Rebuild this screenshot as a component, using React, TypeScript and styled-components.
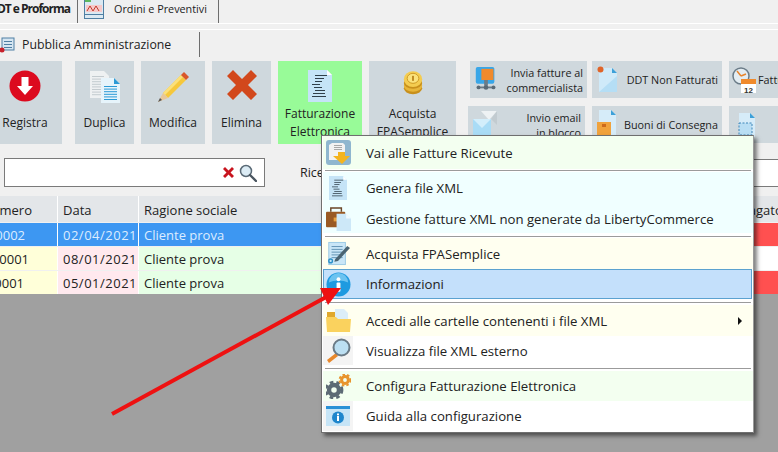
import React from "react";
import styled, { createGlobalStyle } from "styled-components";

const Global = createGlobalStyle`
  html, body { margin: 0; padding: 0; background: #f0f0f0; }
  #root { width: 778px; height: 452px; }
`;

const Page = styled.div`
  position: relative;
  width: 778px;
  height: 452px;
  overflow: hidden;
  background: #f0f0f0;
  display: flex;
  flex-direction: column;
  font-family: "Open Sans", "Noto Sans", sans-serif;
  font-size: 12px;
  color: #222;
`;

const TabBar = styled.div<{ $h: number; $mt?: number }>`
  display: flex;
  height: ${(p) => p.$h}px;
  margin-top: ${(p) => p.$mt ?? 0}px;
  border-bottom: 1px solid #fff;
  flex: none;
  align-items: flex-end;
`;

const SubTabBar = styled.div`
  display: flex;
  border-top: 1px solid #fff;
  margin-top: 5px;
  flex: none;
  padding-top: 2px;
  height: 25px;
`;

const Tab = styled.div<{ $w: number; $bold?: boolean; $ml?: number; $gap?: number; $pb?: number; $size?: number }>`
  width: ${(p) => p.$w}px;
  margin-left: ${(p) => p.$ml ?? 0}px;
  height: 100%;
  box-sizing: border-box;
  border-right: 1px solid #6e6e6e;
  display: flex;
  align-items: center;
  gap: ${(p) => p.$gap ?? 10}px;
  padding-left: 6px;
  padding-bottom: ${(p) => p.$pb ?? 0}px;
  white-space: nowrap;
  font-size: ${(p) => p.$size ?? 12}px;
  font-weight: ${(p) => (p.$bold ? 700 : 400)};
  letter-spacing: ${(p) => (p.$bold ? "-1px" : "0")};
  flex: none;
`;

const BoldTabText = styled.span`
  padding-left: 7px;
`;

const Toolbar = styled.div`
  display: flex;
  height: 83px;
  margin: 4px 0 0 -12px;
  gap: 7px;
  flex: none;
`;

const LargeButton = styled.div<{ $w: number; $green?: boolean; $after?: number }>`
  width: ${(p) => p.$w}px;
  margin-right: ${(p) => p.$after ?? 0}px;
  background: ${(p) => (p.$green ? "#98fb98" : "#cfd8dd")};
  display: flex;
  flex-direction: column;
  align-items: center;
  padding-top: 9px;
  box-sizing: border-box;
  text-align: center;
  line-height: 18px;
  flex: none;
  white-space: nowrap;
`;

const IconSlot = styled.div`
  height: 34px;
  display: flex;
  align-items: flex-start;
  justify-content: center;
`;

const Label = styled.div<{ $single?: boolean }>`
  margin-top: ${(p) => (p.$single ? 10 : 1)}px;
`;

const SmallColumn = styled.div`
  display: flex;
  flex-direction: column;
  gap: 8px;
  margin-left: 7px;
`;

const SmallRow = styled.div<{ $ml?: number }>`
  display: flex;
  margin-left: ${(p) => p.$ml ?? 0}px;
`;

const SmallButton = styled.div<{ $w: number; $mr?: number }>`
  width: ${(p) => p.$w}px;
  margin-right: ${(p) => p.$mr ?? 0}px;
  height: 37px;
  background: #cfd8dd;
  display: flex;
  align-items: center;
  justify-content: space-between;
  box-sizing: border-box;
  padding: 0 4px 0 5px;
  font-size: 10.8px;
  text-align: right;
  line-height: 15px;
  white-space: nowrap;
  flex: none;
  & > svg { flex: none; }
`;

const FarButton = styled(SmallButton)<{ $pl: number }>`
  justify-content: flex-start;
  padding-left: ${(p) => p.$pl}px;
`;

const SearchRow = styled.div`
  display: flex;
  align-items: center;
  height: 29px;
  margin: 14px 0 9px 4px;
  flex: none;
`;

const SearchBox = styled.div`
  width: 261px;
  height: 29px;
  box-sizing: border-box;
  border: 1px solid #7a7a7a;
  background: #fff;
  display: flex;
  align-items: center;
  justify-content: flex-end;
  gap: 4px;
  padding-right: 7px;
`;

const SearchLabel = styled.div`
  margin-left: 35px;
  width: 60px;
  flex: none;
  font-size: 12.5px;
`;

const SecondBox = styled.div`
  flex: 1;
  height: 28px;
  box-sizing: border-box;
  margin-left: 60px;
  border: 1px solid #7a7a7a;
  border-right: 0;
  background: #fff;
`;

const Table = styled.div`
  display: flex;
  flex-direction: column;
  flex: none;
`;

const Row = styled.div<{ $head?: boolean }>`
  display: grid;
  grid-template-columns: 57px 80px 1fr 42px;
  height: ${(p) => (p.$head ? 26 : 23)}px;
  margin-bottom: 1px;
  column-gap: 1px;
  line-height: ${(p) => (p.$head ? 28 : 24)}px;
  background: #fff;
  font-size: 13px;
`;

const Cell = styled.div<{ $bg: string; $fg?: string; $right?: number }>`
  background: ${(p) => p.$bg};
  color: ${(p) => p.$fg ?? "#222"};
  padding: 0 0 0 5px;
  overflow: hidden;
  white-space: nowrap;
  ${(p) =>
    p.$right !== undefined
      ? `padding: 0 ${p.$right}px 0 0; text-align: right; direction: rtl;`
      : ""}
`;

const DateCell = styled(Cell)`
  letter-spacing: 0.5px;
`;

const Canvas = styled.div`
  flex: 1;
  background: #a0a0a0;
  margin-top: -1px;
`;

const Menu = styled.div`
  position: absolute;
  left: 321px;
  top: 135px;
  width: 433px;
  height: 298px;
  box-sizing: border-box;
  background: #fff;
  border: 1px solid #6f6f6f;
  border-right-color: #9a9a9a;
  box-shadow: 3px 3px 4px rgba(0, 0, 0, 0.5);
  display: flex;
  flex-direction: column;
  padding-left: 1px;
`;

const MenuItem = styled.div<{ $bg?: string; $h: number; $active?: boolean }>`
  height: ${(p) => p.$h}px;
  flex: none;
  box-sizing: border-box;
  background: ${(p) => p.$bg ?? "#fff"};
  display: flex;
  align-items: center;
  font-size: 13.2px;
  color: #222;
  position: relative;
  margin-right: ${(p) => (p.$active ? 1 : 0)}px;
  border: ${(p) => (p.$active ? "1px solid #5ba2d0" : "0")};
`;

const MenuIcon = styled.div<{ $active?: boolean; $tile?: boolean }>`
  width: ${(p) => (p.$active ? 29 : 30)}px;
  margin-right: 13px;
  display: flex;
  align-items: center;
  justify-content: center;
  flex: none;
  align-self: stretch;
  background: ${(p) => (p.$tile ? "#f4f4f4" : "transparent")};
`;

const Separator = styled.div<{ $top?: number; $bottom?: number }>`
  height: 1px;
  margin: ${(p) => p.$top ?? 0}px 2px ${(p) => p.$bottom ?? 2}px 2px;
  background: #9b9b9b;
  flex: none;
`;

const SubArrow = styled.div`
  position: absolute;
  right: 11px;
  top: 50%;
  margin-top: -4px;
  border-left: 4px solid #111;
  border-top: 4px solid transparent;
  border-bottom: 4px solid transparent;
`;

const ArrowOverlay = styled.svg`
  position: absolute;
  left: 0;
  top: 0;
  pointer-events: none;
`;

const Info = ({ s = 25 }: { s?: number }) => (
  <svg width={s} height={s} viewBox="0 0 26 26">
    <circle cx="13" cy="13" r="12.5" fill="#1e9ae0" />
    <path d="M3 11a10 10 0 0 1 20 0c-5-3-15-3-20 0z" fill="#6cc3f0" />
    <circle cx="13" cy="7.5" r="2" fill="#fff" />
    <rect x="11" y="11" width="4" height="9.5" rx="1" fill="#fff" />
  </svg>
);

const Lines = ({ x, y, w, n, gap, c }: { x: number; y: number; w: number; n: number; gap: number; c: string }) => (
  <>
    {Array.from({ length: n }).map((_, i) => (
      <rect key={i} x={x} y={y + i * gap} width={w} height="1" fill={c} />
    ))}
  </>
);

const XmlDoc = ({ w = 24, h = 32 }: { w?: number; h?: number }) => (
  <svg width={w} height={h} viewBox="0 0 24 32">
    <path d="M0 0h19l5 5v27H0z" fill="#c5e4f7" />
    <path d="M19 0l5 5h-5z" fill="#fff" />
    <g fill="#2f3f4a">
      <rect x="7" y="5" width="12" height="1" />
      <rect x="7" y="8" width="9" height="1" />
      <rect x="7" y="11" width="7" height="1" />
      <rect x="4" y="14" width="8" height="1" />
      <rect x="6" y="17" width="8" height="1" />
      <rect x="7" y="20" width="10" height="1" />
      <rect x="5" y="23" width="12" height="1" />
      <rect x="4" y="26" width="14" height="1" />
    </g>
  </svg>
);

const Registra = () => (
  <svg width="32" height="32" viewBox="0 0 32 32">
    <circle cx="16" cy="16" r="15.5" fill="#dc0a1e" />
    <path d="M12.5 7h7v9h4.5L16 25l-8-9h4.5z" fill="#fff" />
  </svg>
);
const Duplica = () => (
  <svg width="32" height="34" viewBox="0 0 32 34">
    <path d="M1 1h14l5 5v22H1z" fill="#eef1f2" />
    <Lines x={3} y={6} w={12} n={8} gap={2.6} c="#c3cbcf" />
    <path d="M12 8h13l6 6v19H12z" fill="#e6f4fb" />
    <path d="M25 8l6 6h-6z" fill="#2a9ad6" />
    <Lines x={15} y={16} w={13} n={6} gap={2.6} c="#2a9ad6" />
  </svg>
);
const Pencil = () => (
  <svg width="34" height="34" viewBox="0 0 34 34">
    <path d="M7 23L25 5l5 5-18 18z" fill="#f6c83c" />
    <path d="M7 23L25 5l2 2L9 25z" fill="#fbe07a" />
    <path d="M25 5l3-3 5 5-3 3z" fill="#d9562a" />
    <path d="M7 23l5 5-10 4z" fill="#e8c79a" />
    <path d="M4 28l2 2-4 2z" fill="#555" />
  </svg>
);
const Cross = () => (
  <svg width="30" height="30" viewBox="0 0 30 30">
    <path d="M6 0l9 9 9-9 6 6-9 9 9 9-6 6-9-9-9 9-6-6 9-9-9-9z" fill="#d2481c" />
  </svg>
);
const Coins = () => (
  <svg width="22" height="25" viewBox="0 0 24 30">
    <ellipse cx="12" cy="22" rx="11" ry="7" fill="#c8901c" />
    <ellipse cx="12" cy="19" rx="11" ry="7" fill="#e8b63a" />
    <ellipse cx="12" cy="15.5" rx="11" ry="7" fill="#c8901c" />
    <ellipse cx="12" cy="11" rx="11" ry="9.5" fill="#f4cc50" />
    <ellipse cx="12" cy="10" rx="7" ry="6" fill="#fbe27c" stroke="#c8901c" />
    <rect x="11" y="7" width="2" height="6" fill="#b57d14" />
  </svg>
);
const Invia = () => (
  <svg width="22" height="26" viewBox="0 0 22 28">
    <rect x="0" y="0" width="20" height="18" rx="2" fill="#38a6e8" />
    <rect x="6" y="2" width="13" height="12" fill="#f08a2c" />
    <rect x="9" y="14" width="4" height="6" fill="#6b7c88" />
    <rect x="1" y="21" width="20" height="2" fill="#6b7c88" />
    <circle cx="11" cy="22" r="2.5" fill="#5a6a76" />
    <circle cx="3" cy="22" r="2" fill="#5a6a76" />
    <circle cx="19" cy="22" r="2" fill="#5a6a76" />
  </svg>
);
const DocPin = () => (
  <svg width="22" height="28" viewBox="0 0 22 28">
    <path d="M2 2h13l5 5v19H2z" fill="#cfeaf9" />
    <path d="M2 26L20 10v16z" fill="#b5def5" />
    <path d="M15 2l5 5h-5z" fill="#3da0d8" />
    <circle cx="3.5" cy="3.5" r="3" fill="#e06428" />
  </svg>
);
const CalClock = () => (
  <svg width="26" height="28" viewBox="0 0 26 28">
    <circle cx="9" cy="10" r="8" fill="#e4edf2" stroke="#6b7c88" strokeWidth="1.5" />
    <path d="M9 10L5 5M9 10l5-2" stroke="#e8842c" strokeWidth="1.5" />
    <rect x="9" y="13" width="15" height="14" fill="#fff" />
    <rect x="9" y="13" width="15" height="5" fill="#f08a2c" />
    <text x="16.5" y="26.5" fontSize="8" fontWeight="700" textAnchor="middle" fill="#333" fontFamily="Liberation Sans">12</text>
  </svg>
);
const Mail = () => (
  <svg width="26" height="30" viewBox="0 0 26 30">
    <path d="M8 1h16l-8 9z" fill="#eef2f4" />
    <path d="M24 1v14l-6-6z" fill="#c2cbd0" />
    <path d="M0 9h18v20H0z" fill="#a9dcf6" />
    <path d="M0 9l9 9 9-9z" fill="#d3eefb" />
  </svg>
);
const DocBox = () => (
  <svg width="20" height="30" viewBox="0 0 20 30">
    <path d="M2 0h12l5 5v25H2z" fill="#d6ecf9" />
    <path d="M14 0l5 5h-5z" fill="#3da0d8" />
    <rect x="0" y="12" width="14" height="18" fill="#f0a23c" />
    <rect x="5" y="14" width="4" height="3" fill="#cc6a1c" />
  </svg>
);
const DocDash = () => (
  <svg width="18" height="24" viewBox="0 0 18 24">
    <path d="M2 0h11l5 5v19H2z" fill="#d6ecf9" />
    <path d="M13 0l5 5h-5z" fill="#3da0d8" />
    <rect x="2" y="10" width="13" height="12" fill="#b9def4" stroke="#3f86b8" strokeDasharray="2 1.5" />
  </svg>
);
const OrderDoc = () => (
  <svg width="20" height="21" viewBox="0 0 20 21">
    <rect x="0.5" y="0.5" width="19" height="20" fill="#dbe9f2" stroke="#4f7fa3" />
    <rect x="1" y="1" width="6" height="3" fill="#5cb85c" />
    <rect x="2" y="7" width="16" height="7" fill="#f6c9c9" />
    <path d="M3 13l3-5 3 5 3-5 3 5" stroke="#c0392b" fill="none" />
    <rect x="1" y="16" width="18" height="1" fill="#4f7fa3" />
  </svg>
);
const PaDoc = () => (
  <svg width="17" height="18" viewBox="0 0 17 18">
    <rect x="3" y="2" width="12" height="12" fill="#d6e6f2" stroke="#4f7fa3" />
    <Lines x={5} y={5} w={8} n={3} gap={3} c="#4f7fa3" />
    <circle cx="3" cy="14" r="2.5" fill="#c8202a" />
  </svg>
);
const Magnifier = ({ s = 18 }: { s?: number }) => (
  <svg width={s} height={s} viewBox="0 0 18 18">
    <circle cx="7" cy="7" r="5.5" fill="#dcecf5" stroke="#5a6a76" strokeWidth="1.5" />
    <path d="M11 11l6 6" stroke="#4a5660" strokeWidth="2.4" strokeLinecap="round" />
  </svg>
);
const RedX = () => (
  <svg width="13" height="13" viewBox="0 0 13 13">
    <path d="M1 3l2-2 3.5 3.5L10 1l2 2-3.5 3.5L12 10l-2 2-3.5-3.5L3 12l-2-2 3.5-3.5z" fill="#c8141e" />
  </svg>
);
const VaiIcon = () => (
  <svg width="25" height="25" viewBox="0 0 25 25">
    <rect width="25" height="25" rx="3" fill="#8fb6cf" />
    <path d="M3 20V5l3-2h11l2 2v15z" fill="#f2f2f2" />
    <Lines x={8} y={5} w={8} n={3} gap={2} c="#a8a8a8" />
    <path d="M12 12h7v4h5l-8 8-9-8h5z" fill="#f4b41e" />
  </svg>
);
const CaseIcon = () => (
  <svg width="25" height="25" viewBox="0 0 26 26">
    <rect x="0" y="6" width="20" height="16" rx="1" fill="#9a5a24" />
    <path d="M5 6V2h11v4" fill="none" stroke="#6a4628" strokeWidth="1.5" />
    <rect x="8" y="12" width="4" height="4" fill="#e8a040" />
    <path d="M11 8h10l5 5v13H11z" fill="#cde8f8" />
    <path d="M21 8l5 5h-5z" fill="#f2fafe" />
  </svg>
);
const BuyIcon = () => (
  <svg width="24" height="25" viewBox="0 0 26 26">
    <rect x="3" y="1" width="18" height="24" fill="#c9e6f7" stroke="#98c8e4" />
    <Lines x={6} y={5} w={12} n={5} gap={3} c="#5d8fb0" />
    <path d="M10 19L23 5l3 2-13 14-4 1z" fill="#4a6472" />
    <circle cx="5" cy="21" r="2" fill="none" stroke="#2b90c8" strokeWidth="1.5" />
  </svg>
);
const FolderIcon = () => (
  <svg width="25" height="23" viewBox="0 0 25 23">
    <path d="M1 3h8l2-2h8v16H1z" fill="#e0a82c" />
    <path d="M9 0h9l4 4v14H9z" fill="#dceef9" />
    <path d="M0 8h10l2 2h13l-1 13H1z" fill="#fad25e" />
  </svg>
);
const GlassIcon = () => (
  <svg width="25" height="25" viewBox="0 0 25 25">
    <path d="M10 15L1 22l2 3L12 18z" fill="#e8882c" />
    <circle cx="15.5" cy="9.5" r="8" fill="#bcdff2" stroke="#6a7a86" strokeWidth="2" />
  </svg>
);
const Gear = ({ cx, cy, r, c }: { cx: number; cy: number; r: number; c: string }) => (
  <g>
    <circle cx={cx} cy={cy} r={r} fill="none" stroke={c} strokeWidth={r * 0.35} strokeDasharray={`${r * 0.45} ${r * 0.38}`} />
    <circle cx={cx} cy={cy} r={r * 0.62} fill="none" stroke={c} strokeWidth={r * 0.55} />
  </g>
);
const GearIcon = () => (
  <svg width="25" height="25" viewBox="0 0 25 25">
    <Gear cx={8} cy={16} r={8} c="#5c6a74" />
    <Gear cx={19} cy={6} r={5.5} c="#e8942c" />
  </svg>
);
const WindowIcon = () => (
  <svg width="24" height="20" viewBox="0 0 24 20">
    <rect width="24" height="20" fill="#c6e4f6" />
    <rect width="24" height="3" fill="#2b90d6" />
    <circle cx="12" cy="11.5" r="6" fill="#1e86cc" />
    <rect x="11" y="10" width="2" height="5" fill="#fff" />
    <rect x="11" y="7.5" width="2" height="1.8" fill="#fff" />
  </svg>
);

export default function App() {
  return (
    <Page>
      <Global />
      <TabBar $h={23}>
        <Tab $w={102} $ml={-24} $bold $pb={6}>
          <BoldTabText>DDT e Proforma</BoldTabText>
        </Tab>
        <Tab $w={141} $size={10.8} $pb={6}>
          <OrderDoc />
          <span>Ordini e Preventivi</span>
        </Tab>
      </TabBar>
      <SubTabBar>
        <Tab $w={207} $ml={-7} $gap={6} $size={12.3}>
          <PaDoc />
          <span>Pubblica Amministrazione</span>
        </Tab>
      </SubTabBar>
      <Toolbar>
        <LargeButton $w={74} $after={6}>
          <IconSlot><Registra /></IconSlot>
          <Label $single>Registra</Label>
        </LargeButton>
        <LargeButton $w={59}>
          <IconSlot><Duplica /></IconSlot>
          <Label $single>Duplica</Label>
        </LargeButton>
        <LargeButton $w={64}>
          <IconSlot><Pencil /></IconSlot>
          <Label $single>Modifica</Label>
        </LargeButton>
        <LargeButton $w={59}>
          <IconSlot><Cross /></IconSlot>
          <Label $single>Elimina</Label>
        </LargeButton>
        <LargeButton $w={84} $green>
          <IconSlot><XmlDoc /></IconSlot>
          <Label>Fatturazione<br />Elettronica</Label>
        </LargeButton>
        <LargeButton $w={87}>
          <IconSlot><Coins /></IconSlot>
          <Label>Acquista<br />FPASemplice</Label>
        </LargeButton>
        <SmallColumn>
          <SmallRow $ml={0}>
            <SmallButton $w={117} $mr={5}><Invia /><span>Invia fatture al<br />commercialista</span></SmallButton>
            <SmallButton $w={130} $mr={7}><DocPin /><span>DDT Non Fatturati</span></SmallButton>
            <FarButton $w={60} $pl={3}><CalClock /><span>Fatture</span></FarButton>
          </SmallRow>
          <SmallRow $ml={-2}>
            <SmallButton $w={117} $mr={7}><Mail /><span>Invio email<br />in blocco</span></SmallButton>
            <SmallButton $w={130} $mr={7}><DocBox /><span>Buoni di Consegna</span></SmallButton>
            <FarButton $w={60} $pl={8}><DocDash /></FarButton>
          </SmallRow>
        </SmallColumn>
      </Toolbar>
      <SearchRow>
        <SearchBox><RedX /><Magnifier /></SearchBox>
        <SearchLabel>Ricerca</SearchLabel>
        <SecondBox />
      </SearchRow>
      <Table>
        <Row $head>
          <Cell $bg="#e3e6e9" $right={25}>Numero</Cell>
          <Cell $bg="#e3e6e9">Data</Cell>
          <Cell $bg="#e3e6e9">Ragione sociale</Cell>
          <Cell $bg="#e3e6e9">Pagato</Cell>
        </Row>
        <Row>
          <Cell $bg="#3d97f2" $fg="#dcecff" $right={32}>0002</Cell>
          <DateCell $bg="#3d97f2" $fg="#dcecff">02/04/2021</DateCell>
          <Cell $bg="#3d97f2" $fg="#dcecff">Cliente prova</Cell>
          <Cell $bg="#ff5050" />
        </Row>
        <Row>
          <Cell $bg="#ffffd9" $right={28}>00001</Cell>
          <DateCell $bg="#ffe9ee">08/01/2021</DateCell>
          <Cell $bg="#e6ffe6">Cliente prova</Cell>
          <Cell $bg="#fff" />
        </Row>
        <Row>
          <Cell $bg="#ffffd9" $right={33}>0001</Cell>
          <DateCell $bg="#ffe9ee">05/01/2021</DateCell>
          <Cell $bg="#e6ffe6">Cliente prova</Cell>
          <Cell $bg="#ff5050" />
        </Row>
      </Table>
      <Canvas />
      <Menu>
        <MenuItem $h={33} $bg="#f3fff0"><MenuIcon><VaiIcon /></MenuIcon>Vai alle Fatture Ricevute</MenuItem>
        <Separator $top={1} $bottom={1} />
        <MenuItem $h={32} $bg="#f0ffff"><MenuIcon><XmlDoc w={18} h={24} /></MenuIcon>Genera file XML</MenuItem>
        <MenuItem $h={29} $bg="#f0ffff"><MenuIcon><CaseIcon /></MenuIcon>Gestione fatture XML non generate da LibertyCommerce</MenuItem>
        <Separator $top={3} $bottom={1} />
        <MenuItem $h={31} $bg="#fffff0"><MenuIcon><BuyIcon /></MenuIcon>Acquista FPASemplice</MenuItem>
        <MenuItem $h={30} $bg="#c4e0fb" $active><MenuIcon $active><Info /></MenuIcon>Informazioni</MenuItem>
        <Separator $top={3} />
        <MenuItem $h={31} $bg="#fffff0"><MenuIcon><FolderIcon /></MenuIcon>Accedi alle cartelle contenenti i file XML<SubArrow /></MenuItem>
        <MenuItem $h={29}><MenuIcon $tile><GlassIcon /></MenuIcon>Visualizza file XML esterno</MenuItem>
        <Separator $top={3} />
        <MenuItem $h={30} $bg="#f3fff0"><MenuIcon><GearIcon /></MenuIcon>Configura Fatturazione Elettronica</MenuItem>
        <MenuItem $h={30}><MenuIcon $tile><WindowIcon /></MenuIcon>Guida alla configurazione</MenuItem>
      </Menu>
      <ArrowOverlay width="778" height="452" viewBox="0 0 778 452">
        <path d="M112 414L328 296" stroke="#ee1111" strokeWidth="4" fill="none" />
        <path d="M320 288h21l-13 17z" fill="#ee1111" />
      </ArrowOverlay>
    </Page>
  );
}
